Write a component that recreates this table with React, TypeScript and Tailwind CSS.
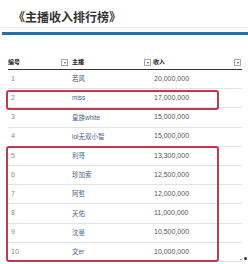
import React from 'react';

const rows = [
  { id: 1, name: '若风', income: '20,000,000' },
  { id: 2, name: 'miss', income: '17,000,000' },
  { id: 3, name: '皇族white', income: '15,000,000' },
  { id: 4, name: 'lol无双小智', income: '15,000,000' },
  { id: 5, name: '利哥', income: '13,300,000' },
  { id: 6, name: '珍加索', income: '12,500,000' },
  { id: 7, name: '阿哲', income: '12,000,000' },
  { id: 8, name: '天佑', income: '11,000,000' },
  { id: 9, name: '沈曼', income: '10,500,000' },
  { id: 10, name: '文er', income: '10,000,000' },
];

const FilterButton: React.FC = () => (
  <span className="w-[7px] h-[7px] border border-[#a8a8a8] bg-white flex items-center justify-center">
    <span className="w-0 h-0 border-l-[1.5px] border-r-[1.5px] border-t-[2px] border-l-transparent border-r-transparent border-t-[#555]" />
  </span>
);

export default function App() {
  return (
    <div
      className="relative w-[248px] h-[264px] bg-white overflow-hidden"
      style={{ fontFamily: '"Liberation Sans", "Noto Sans CJK SC", sans-serif' }}
    >
      {/* Title */}
      <div className="pt-[12px] pl-[13px] text-[12px] leading-[12px] font-bold text-[#333]">
        《主播收入排行榜》
      </div>
      <div className="mt-[3px] h-px bg-[#eeeeee]" />
      <div className="mt-[4px] ml-[2px] h-[3px] bg-[#2f6ba4]" />

      {/* Table */}
      <div className="ml-[8px] mt-[21px] w-[234px]">
        <div className="flex h-[14px] items-center border-b border-[#333] text-[6px] font-bold text-[#222]">
          <div className="w-[63px] flex items-center justify-between pr-[3px]">
            <span>编号</span>
            <FilterButton />
          </div>
          <div className="w-[81px] flex items-center justify-between pl-[1px] pr-[1px]">
            <span>主播</span>
            <FilterButton />
          </div>
          <div className="flex-1 flex items-center justify-between pl-[1px] pr-[1px]">
            <span>收入</span>
            <FilterButton />
          </div>
        </div>
        {rows.map((r) => (
          <div key={r.id} className="flex h-[19.2px] items-center border-b border-[#e2e2e2]">
            <div className="w-[63px] pl-[3px] text-[7px] text-[#8a8a8a]">{r.id}</div>
            <div className="w-[81px] pl-[1px] text-[6.5px] text-[#3f5f86]">{r.name}</div>
            <div className="flex-1 pl-[2px] text-[7px] text-[#555]">{r.income}</div>
          </div>
        ))}
      </div>

      {/* Highlight boxes */}
      <div className="absolute left-[6px] top-[90px] w-[213px] h-[20px] border-2 border-[#c2384f] rounded-[3px]" />
      <div className="absolute left-[6px] top-[146px] w-[213px] h-[116px] border-2 border-[#c2384f] rounded-[3px]" />

      <div className="absolute left-[240px] top-[259px] w-[2px] h-[1px] bg-[#999]" />
      <div className="absolute left-[244px] top-[257px] w-[3px] h-[3px] rounded-full bg-[#333]" />
    </div>
  );
}
